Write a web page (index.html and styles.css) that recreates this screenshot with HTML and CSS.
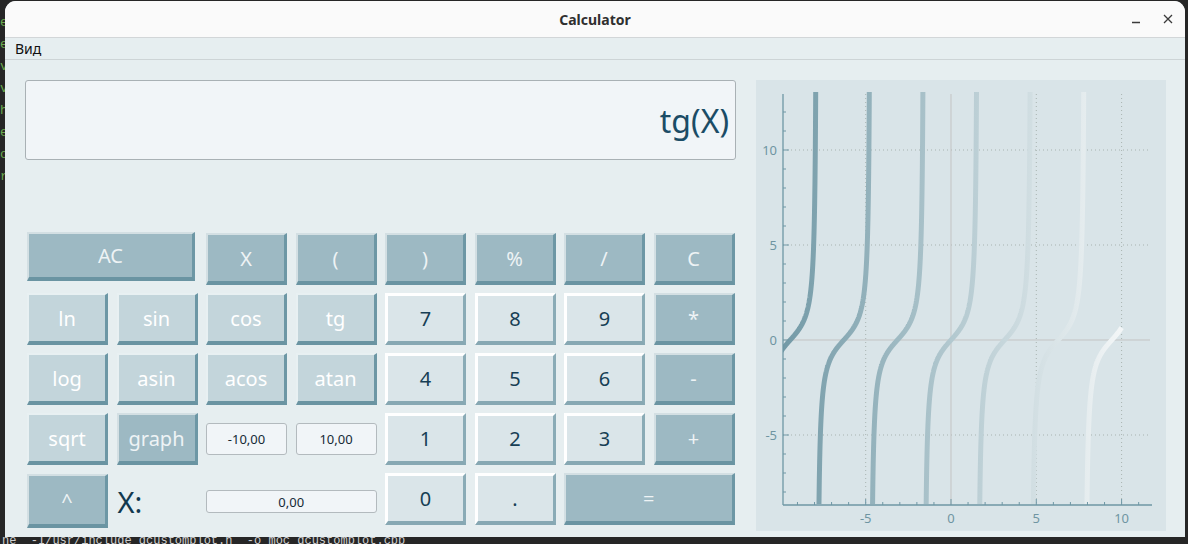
FILE: index.html
```html
<!DOCTYPE html>
<html lang="ru">
<head>
<meta charset="utf-8">
<title>Calculator</title>
<link rel="stylesheet" href="styles.css">
</head>
<body>
<div class="desktop">
  <pre class="terminal"><span class="g">e</span>
<span class="g">e</span>
<span class="g">v</span>
<span class="g">v</span>
<span class="g">h</span>
<span class="g">e</span>
<span class="g">o</span>
<span class="g">r</span>
</pre>
  <pre class="terminal-bottom">ne  -I/usr/include qcustomplot.h  -o moc_qcustomplot.cpp</pre>

  <div class="window">
    <header class="titlebar">
      <span class="title">Calculator</span>
      <div class="controls">
        <svg class="ctl" width="14" height="14" viewBox="0 0 14 14"><line x1="3" y1="10.5" x2="11" y2="10.5" stroke="#3a3a3a" stroke-width="1.3"/></svg>
        <svg class="ctl" width="14" height="14" viewBox="0 0 14 14"><path d="M3 3 L11 11 M11 3 L3 11" stroke="#3a3a3a" stroke-width="1.3" fill="none"/></svg>
      </div>
    </header>
    <nav class="menubar"><span class="menu-item">Вид</span></nav>
    <main class="content">
      <section class="calc">
        <div class="display">tg(X)</div>
        <div class="keys">
          <button class="key op span2 ac">AC</button>
          <button class="key op">X</button>
          <button class="key op">(</button>
          <button class="key op">)</button>
          <button class="key op">%</button>
          <button class="key op">/</button>
          <button class="key op">C</button>

          <button class="key fn">ln</button>
          <button class="key fn">sin</button>
          <button class="key fn">cos</button>
          <button class="key fn">tg</button>
          <button class="key num">7</button>
          <button class="key num">8</button>
          <button class="key num">9</button>
          <button class="key op">*</button>

          <button class="key fn">log</button>
          <button class="key fn">asin</button>
          <button class="key fn">acos</button>
          <button class="key fn">atan</button>
          <button class="key num">4</button>
          <button class="key num">5</button>
          <button class="key num">6</button>
          <button class="key op">-</button>

          <button class="key fn">sqrt</button>
          <button class="key op">graph</button>
          <div class="cell"><div class="field">-10,00</div></div>
          <div class="cell"><div class="field">10,00</div></div>
          <button class="key num">1</button>
          <button class="key num">2</button>
          <button class="key num">3</button>
          <button class="key op">+</button>

          <button class="key op pow">^</button>
          <div class="xlabel">X:</div>
          <div class="cell span2 low"><div class="field small">0,00</div></div>
          <button class="key num">0</button>
          <button class="key num">.</button>
          <button class="key op span2">=</button>
        </div>
      </section>
      <section class="graph">
        <svg id="plot" width="410" height="451" viewBox="0 0 410 451"></svg>
      </section>
    </main>
  </div>
</div>
<script src="script.js"></script>
</body>
</html>
```

FILE: styles.css
```css
* { box-sizing: border-box; }
html, body { margin: 0; padding: 0; }
body {
  width: 1188px;
  height: 544px;
  overflow: hidden;
  background: #262626;
  font-family: "Noto Sans", "DejaVu Sans", sans-serif;
}
.desktop {
  position: relative;
  width: 1188px;
  height: 544px;
}
.terminal {
  position: absolute;
  left: 0;
  top: 12px;
  margin: 0;
  font: 13px/22px "Liberation Mono", monospace;
  color: #c8c8c8;
}
.terminal .g { color: #6aa84f; }
.terminal-bottom {
  position: absolute;
  left: 2px;
  top: 534px;
  margin: 0;
  font: 12px/14px "Liberation Mono", monospace;
  color: #cfcfcf;
}
.window {
  position: absolute;
  left: 5px;
  top: 1px;
  width: 1180px;
  height: 536px;
  background: #e6eef0;
  border-radius: 11px 11px 0 0;
  overflow: hidden;
  display: flex;
  flex-direction: column;
}
.titlebar {
  height: 37px;
  flex: none;
  background: #fafafa;
  border-bottom: 1px solid #d2d6d8;
  display: flex;
  align-items: center;
  justify-content: center;
  position: relative;
}
.title {
  font-size: 14px;
  font-weight: bold;
  color: #2f2f2f;
  padding-top: 1px;
}
.controls {
  position: absolute;
  right: 10px;
  top: 11px;
  display: flex;
  gap: 18px;
}
.ctl { display: block; }
.menubar {
  height: 22px;
  flex: none;
  background: #e6eef0;
  border-bottom: 1px solid #cdd4d6;
  display: flex;
  align-items: center;
  padding-left: 10px;
}
.menu-item {
  font-size: 14px;
  color: #111;
}
.content {
  flex: 1;
  display: flex;
  padding: 20px 19px 0 20px;
  gap: 20px;
}
.calc {
  width: 711px;
  flex: none;
}
.display {
  height: 80px;
  border: 1px solid #a9b1b5;
  border-radius: 3px;
  background: #f1f5f8;
  display: flex;
  align-items: center;
  justify-content: flex-end;
  padding-right: 6px;
  font-size: 32px;
  color: #1b4c66;
}
.keys {
  margin: 73px 0 0 2px;
  display: grid;
  grid-template-columns: repeat(8, 81px);
  grid-template-rows: repeat(5, 52px);
  column-gap: 8.5px;
  row-gap: 8px;
}
.span2 { grid-column: span 2; }
.key {
  margin: 0;
  padding: 0;
  display: flex;
  align-items: center;
  justify-content: center;
  font-family: "Noto Sans", "DejaVu Sans", sans-serif;
  font-size: 20px;
  border-style: solid;
  border-width: 2px 3px 4px 2px;
}
.key.op {
  background: #9db9c3;
  color: #eef3f5;
  border-color: #d3dfe3 #6d97a5 #6a94a2 #d3dfe3;
}
.key.fn {
  background: #c3d5db;
  color: #ffffff;
  border-color: #e8f0f2 #6d97a5 #6a94a2 #e8f0f2;
}
.key.num {
  background: #dae5e9;
  color: #173f55;
  border-color: #ffffff #8aabb6 #87a8b3 #ffffff;
  border-width: 3px 3px 4px 3px;
}
.key.ac { width: 168px; height: 49px; margin-top: -1px; }
.key.pow { height: 54px; margin-top: 1px; }
.cell {
  display: flex;
  align-items: center;
}
.cell.low { padding-top: 5px; }
.field {
  width: 100%;
  height: 32px;
  border: 1px solid #b3babe;
  border-radius: 3px;
  background: #f1f5f8;
  display: flex;
  align-items: center;
  justify-content: center;
  font-size: 13px;
  color: #152a36;
}
.field.small { height: 23px; }
.xlabel {
  display: flex;
  align-items: center;
  padding-left: 1px;
  padding-top: 4px;
  font-size: 29px;
  color: #12394f;
}
.graph {
  width: 410px;
  height: 451px;
  flex: none;
  background: #d9e4e8;
}
#plot { display: block; }
```

FILE: script.js
```js
(function () {
  var svg = document.getElementById('plot');
  var NS = 'http://www.w3.org/2000/svg';
  var X0 = 195, Y0 = 260, SX = 17.06, SY = 19;
  var L = 27, R = 396, T = 14, B = 425;
  function px(x) { return X0 + SX * x; }
  function py(y) { return Y0 - SY * y; }
  function el(tag, attrs, parent) {
    var e = document.createElementNS(NS, tag);
    for (var k in attrs) e.setAttribute(k, attrs[k]);
    (parent || svg).appendChild(e);
    return e;
  }
  var defs = el('defs', {});
  var grad = el('linearGradient', { id: 'cg', gradientUnits: 'userSpaceOnUse', x1: px(-10), y1: 0, x2: px(10), y2: 0 }, defs);
  el('stop', { offset: '0', 'stop-color': '#7299a6' }, grad);
  el('stop', { offset: '0.5', 'stop-color': '#b2c8cf' }, grad);
  el('stop', { offset: '1', 'stop-color': '#f3f6f7' }, grad);
  var cp = el('clipPath', { id: 'clip' }, defs);
  el('rect', { x: L, y: T - 2, width: R - L, height: B - T + 1 }, cp);

  [10, 5, -5].forEach(function (v) {
    el('line', { x1: L, x2: 394, y1: py(v), y2: py(v), stroke: '#a8b3b0', 'stroke-width': 1, 'stroke-dasharray': '1 3' });
  });
  [-5, 5, 10].forEach(function (v) {
    el('line', { x1: px(v), x2: px(v), y1: T, y2: B, stroke: '#a8b3b0', 'stroke-width': 1, 'stroke-dasharray': '1 3' });
  });
  el('line', { x1: L, x2: R - 2, y1: py(0), y2: py(0), stroke: '#c3c3c3', 'stroke-width': 1 });
  el('line', { x1: px(0), x2: px(0), y1: T, y2: B, stroke: '#c3c3c3', 'stroke-width': 1 });

  var g = el('g', { 'clip-path': 'url(#clip)' });
  var d = '', prev = null;
  for (var i = 0; i <= 4000; i++) {
    var x = -10 + i * 0.005;
    var y = Math.tan(x);
    if (y > 16) y = 16;
    if (y < -12) y = -12;
    if (prev !== null && prev > 8 && y < -8) {
      d += ' M';
    } else if (prev === null) {
      d += 'M';
    } else {
      d += ' L';
    }
    d += px(x).toFixed(2) + ' ' + py(y).toFixed(2);
    prev = y;
  }
  el('path', { d: d, fill: 'none', stroke: 'url(#cg)', 'stroke-width': 5, 'stroke-linejoin': 'round' }, g);

  var axis = '#6e97a5';
  el('line', { x1: L, x2: L, y1: T, y2: B, stroke: axis, 'stroke-width': 1.3 });
  el('line', { x1: L, x2: R, y1: B, y2: B, stroke: axis, 'stroke-width': 1.3 });
  for (var v = -8; v <= 12; v++) {
    var major = v % 5 === 0;
    el('line', { x1: L, x2: L + (major ? 6 : 3), y1: py(v), y2: py(v), stroke: axis, 'stroke-width': 1 });
  }
  for (var u = -9; u <= 11; u++) {
    var maj = u % 5 === 0;
    el('line', { x1: px(u), x2: px(u), y1: B, y2: B - (maj ? 6 : 3), stroke: axis, 'stroke-width': 1 });
  }
  var lab = { fill: '#6f95a2', 'font-size': 13, 'font-family': 'Noto Sans, DejaVu Sans, sans-serif' };
  [10, 5, 0, -5].forEach(function (v) {
    var t = el('text', Object.assign({ x: 21, y: py(v) + 5, 'text-anchor': 'end' }, lab));
    t.textContent = String(v);
  });
  [-5, 0, 5, 10].forEach(function (v) {
    var t = el('text', Object.assign({ x: px(v), y: 443, 'text-anchor': 'middle' }, lab));
    t.textContent = String(v);
  });
})();
```
